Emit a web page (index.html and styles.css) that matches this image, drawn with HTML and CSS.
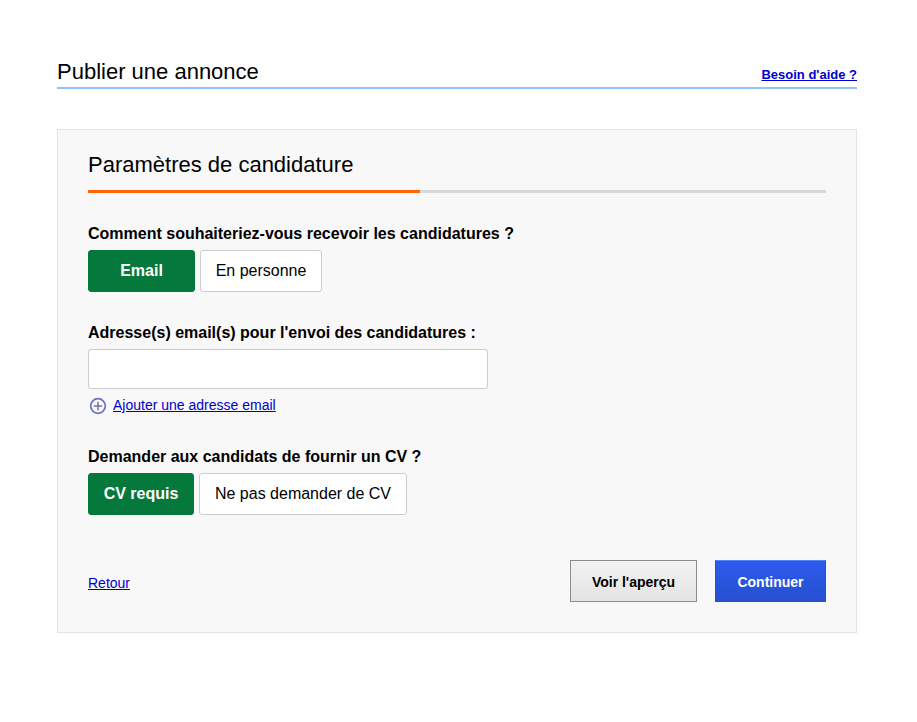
FILE: index.html
```html
<!DOCTYPE html>
<html lang="fr">
<head>
  <meta charset="UTF-8">
  <title>Publier une annonce</title>
  <link rel="stylesheet" href="styles.css">
</head>
<body>
<div class="page">
  <div class="page-head">
    <h1>Publier une annonce</h1>
    <a class="help-link" href="#">Besoin d'aide ?</a>
  </div>

  <div class="panel">
    <h2>Paramètres de candidature</h2>
    <div class="progress"><div class="progress-bar"></div></div>

    <div class="field field-first">
      <div class="label">Comment souhaiteriez-vous recevoir les candidatures ?</div>
      <div class="choices">
        <button class="choice selected choice-email">Email</button>
        <button class="choice choice-person">En personne</button>
      </div>
    </div>

    <div class="field field-email">
      <div class="label">Adresse(s) email(s) pour l'envoi des candidatures :</div>
      <input class="text-input" type="text">
      <div class="add-row">
        <svg class="add-icon" width="18" height="18" viewBox="0 0 18 18">
          <circle cx="9" cy="9" r="7.3" fill="none" stroke="#6f6fc9" stroke-width="1.7"/>
          <path d="M9 4.8v8.4M4.8 9h8.4" fill="none" stroke="#7272a8" stroke-width="1.5"/>
        </svg>
        <a href="#">Ajouter une adresse email</a>
      </div>
    </div>

    <div class="field field-cv">
      <div class="label">Demander aux candidats de fournir un CV ?</div>
      <div class="choices">
        <button class="choice selected choice-cv">CV requis</button>
        <button class="choice choice-nocv">Ne pas demander de CV</button>
      </div>
    </div>

    <div class="actions">
      <a class="back-link" href="#">Retour</a>
      <div class="action-btns">
        <button class="btn btn-preview">Voir l'aperçu</button>
        <button class="btn btn-continue">Continuer</button>
      </div>
    </div>
  </div>
</div>
</body>
</html>
```

FILE: styles.css
```css
body {
  margin: 0;
  background: #fff;
  color: #000;
  font-family: "Liberation Sans", Arial, sans-serif;
}

a {
  color: #00c;
}

.page {
  width: 800px;
  margin-left: 57px;
  padding-top: 58px;
}

.page-head {
  display: flex;
  justify-content: space-between;
  align-items: flex-start;
  height: 29px;
  border-bottom: 2px solid #8fc2fb;
}

h1 {
  margin: 0;
  font-size: 22px;
  font-weight: normal;
  line-height: 27px;
}

.help-link {
  font-size: 13px;
  font-weight: bold;
  line-height: 15px;
  margin-top: 9px;
}

.panel {
  margin-top: 40px;
  height: 502px;
  padding: 0 30px;
  background: #f8f8f8;
  border: 1px solid #e4e4e4;
}

h2 {
  margin: 21px 0 0;
  font-size: 22px;
  font-weight: normal;
  line-height: 27px;
}

.progress {
  margin-top: 12px;
  height: 3px;
  background: #d8d8d8;
}

.progress-bar {
  width: 45%;
  height: 3px;
  background: #f60;
}

.label {
  font-size: 16px;
  font-weight: bold;
  line-height: 18px;
}

.field-first {
  margin-top: 32px;
}

.field-email {
  margin-top: 32px;
}

.field-cv {
  margin-top: 34px;
}

.choices {
  display: flex;
  gap: 5px;
  margin-top: 7px;
}

.choice {
  height: 42px;
  padding: 0;
  font-family: inherit;
  font-size: 16px;
  color: #000;
  background: #fff;
  border: 1px solid #ccc;
  border-radius: 3px;
}

.choice.selected {
  color: #fff;
  font-weight: bold;
  background: #05783b;
  border-color: #05783b;
}

.choice-email { width: 107px; }
.choice-person { width: 122px; }
.choice-cv { width: 106px; }
.choice-nocv { width: 208px; }

.text-input {
  display: block;
  box-sizing: border-box;
  width: 400px;
  height: 40px;
  margin-top: 7px;
  background: #fff;
  border: 1px solid #ccc;
  border-radius: 3px;
}

.add-row {
  display: flex;
  align-items: flex-start;
  gap: 6px;
  height: 18px;
  margin-top: 7px;
  padding-left: 1px;
  font-size: 14px;
  line-height: 18px;
}

.add-icon {
  margin-top: 1px;
}

.actions {
  display: flex;
  justify-content: space-between;
  align-items: center;
  margin-top: 45px;
}

.back-link {
  font-size: 14px;
  margin-top: 3px;
}

.action-btns {
  display: flex;
  gap: 18px;
}

.btn {
  height: 42px;
  padding: 1px 0 0;
  font-family: inherit;
  font-size: 14px;
  font-weight: bold;
}

.btn-preview {
  width: 127px;
  color: #000;
  background: linear-gradient(#f2f2f2, #e4e4e4);
  border: 1px solid #8c8c8c;
}

.btn-continue {
  width: 111px;
  color: #fff;
  background: linear-gradient(#2d5bef, #2550cf);
  border: 1px solid #2550d8;
  border-top-color: #5b82f5;
}
```
